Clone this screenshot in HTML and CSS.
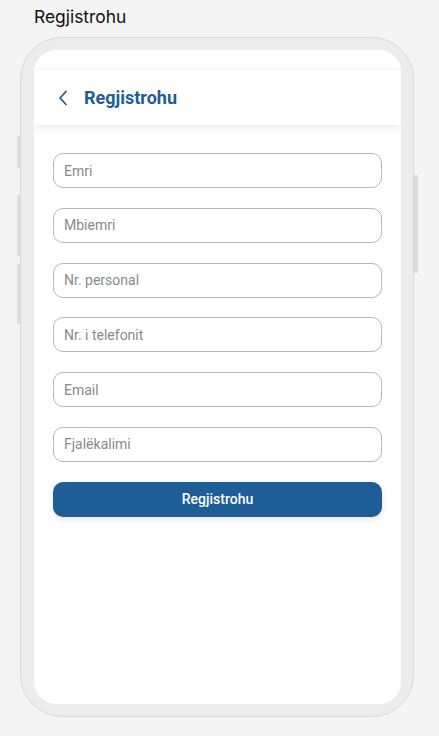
FILE: index.html
```html
<!DOCTYPE html>
<html lang="sq">
<head>
<meta charset="utf-8">
<title>Regjistrohu</title>
<link rel="stylesheet" href="styles.css">
</head>
<body>
<div class="page">
  <div class="caption">Regjistrohu</div>
  <div class="phone">
    <span class="side-btn l1"></span>
    <span class="side-btn l2"></span>
    <span class="side-btn l3"></span>
    <span class="side-btn r1"></span>
    <div class="screen">
      <div class="status"></div>
      <div class="header">
        <svg class="back" width="12" height="16" viewBox="0 0 12 16" aria-hidden="true">
          <path d="M9 1.5 L3 8 L9 14.5" fill="none" stroke="#1e5d96" stroke-width="1.8" stroke-linecap="round" stroke-linejoin="round"/>
        </svg>
        <span class="header-title">Regjistrohu</span>
      </div>
      <form class="form">
        <input class="field" type="text" placeholder="Emri">
        <input class="field" type="text" placeholder="Mbiemri">
        <input class="field" type="text" placeholder="Nr. personal">
        <input class="field" type="text" placeholder="Nr. i telefonit">
        <input class="field" type="text" placeholder="Email">
        <input class="field" type="password" placeholder="Fjalëkalimi">
        <button class="submit" type="button">Regjistrohu</button>
      </form>
    </div>
  </div>
</div>
</body>
</html>
```
FILE: styles.css
```css
* { box-sizing: border-box; }
html, body { margin: 0; padding: 0; }
body {
  background: #f4f4f4;
  width: 439px;
  height: 736px;
  overflow: hidden;
  font-family: Roboto, "Liberation Sans", sans-serif;
}
.page {
  padding: 6px 0 0 20px;
}
.caption {
  margin-left: 14px;
  font-family: Inter, "Liberation Sans", sans-serif;
  font-size: 17.4px;
  line-height: 22px;
  color: #111;
  height: 31px;
}
.phone {
  position: relative;
  width: 394px;
  height: 680px;
  border: 1px solid #d9d9d9;
  background: #ececec;
  border-radius: 42px;
  padding: 12px 12px 12px 13px;
}
.side-btn {
  position: absolute;
  width: 4px;
  background: #dcdcdc;
  border-radius: 1px;
}
.l1 { left: -4px; top: 98px; height: 32px; }
.l2 { left: -4px; top: 157px; height: 61px; }
.l3 { left: -4px; top: 226px; height: 60px; }
.r1 { right: -5px; top: 137px; height: 98px; }
.screen {
  width: 100%;
  height: 100%;
  background: #fff;
  border-radius: 22px;
  overflow: hidden;
}
.status {
  height: 20px;
}
.header {
  height: 55px;
  display: flex;
  align-items: center;
  padding-left: 23px;
  gap: 15px;
  background: #fff;
  box-shadow: 0 3px 8px rgba(0, 0, 0, 0.07), 0 -1px 4px rgba(0, 0, 0, 0.04);
  position: relative;
}
.back { display: block; margin-top: 1px; }
.header-title {
  font-family: Roboto, "Liberation Sans", sans-serif;
  font-weight: 700;
  font-size: 18px;
  color: #1e5d96;
}
.form {
  padding: 28px 19px 0 19px;
  display: flex;
  flex-direction: column;
  gap: 19.8px;
  margin: 0;
}
.field {
  display: block;
  width: 100%;
  height: 35px;
  border: 1px solid #b7b7b0;
  border-radius: 10px;
  padding: 0 10px;
  font-family: Roboto, "Liberation Sans", sans-serif;
  font-size: 14px;
  color: #333;
  background: #fff;
  outline: none;
}
.field::placeholder { color: #8a8a8a; }
.submit {
  display: block;
  width: 100%;
  height: 35px;
  border: 0;
  border-radius: 10px;
  background: #1e5d96;
  color: #fff;
  font-family: Roboto, "Liberation Sans", sans-serif;
  font-weight: 500;
  font-size: 14px;
  box-shadow: 0 2px 6px rgba(0, 0, 0, 0.12);
  margin-top: 0;
}
```
